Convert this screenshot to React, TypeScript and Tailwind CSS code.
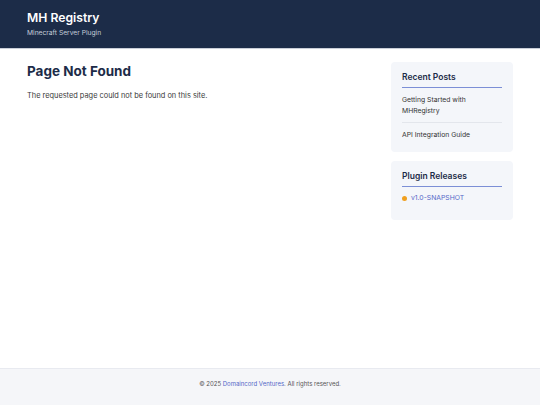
export default function App() {
  return (
    <div className="flex min-h-screen flex-col bg-white font-['Inter',sans-serif]">
      <header className="h-[49px] border-b border-[#c9ced8] bg-[#1c2c48] px-[27px] pt-[10px]">
        <h1 className="text-[12.2px] font-semibold leading-[16px] text-white">MH Registry</h1>
        <p className="mt-[3px] text-[6.7px] leading-[9px] text-[#c4ccd9]">Minecraft Server Plugin</p>
      </header>
      <div className="flex flex-1 gap-[20px] px-[27px] pt-[13px]">
        <main className="flex-1">
          <h2 className="text-[13.5px] font-bold leading-[18px] text-[#1c2c48]">Page Not Found</h2>
          <p className="mt-[10px] text-[7.4px] leading-[11px] text-[#3a3a3a]">
            The requested page could not be found on this site.
          </p>
        </main>
        <aside className="flex w-[122px] flex-col gap-[9px]">
          <div className="h-[90px] rounded-[4px] bg-[#f4f6fa] px-[11px] pt-[10px]">
            <h3 className="border-b-[1.5px] border-[#7c8fd6] pb-[4px] text-[8.5px] font-semibold leading-[11px] text-[#1c2c48]">
              Recent Posts
            </h3>
            <ul className="text-[6.8px] leading-[11px] text-[#333]">
              <li className="border-b border-[#e3e6ec] py-[6px]">Getting Started with MHRegistry</li>
              <li className="pt-[6px]">API Integration Guide</li>
            </ul>
          </div>
          <div className="h-[59px] rounded-[4px] bg-[#f4f6fa] px-[11px] pt-[10px]">
            <h3 className="border-b-[1.5px] border-[#7c8fd6] pb-[4px] text-[8.5px] font-semibold leading-[11px] text-[#1c2c48]">
              Plugin Releases
            </h3>
            <div className="mt-[6px] flex items-center gap-[4px] text-[6.8px] leading-[10px] text-[#5468c8]">
              <span className="h-[5px] w-[5px] rounded-full bg-[#f0a020]" />
              v1.0-SNAPSHOT
            </div>
          </div>
        </aside>
      </div>
      <footer className="h-[37px] border-t border-[#e8eaf0] bg-[#f5f6f9] pt-[10px] text-center text-[6px] leading-[10px] text-[#555]">
        © 2025 <span className="text-[#5468c8]">Domaincord Ventures</span>. All rights reserved.
      </footer>
    </div>
  );
}
